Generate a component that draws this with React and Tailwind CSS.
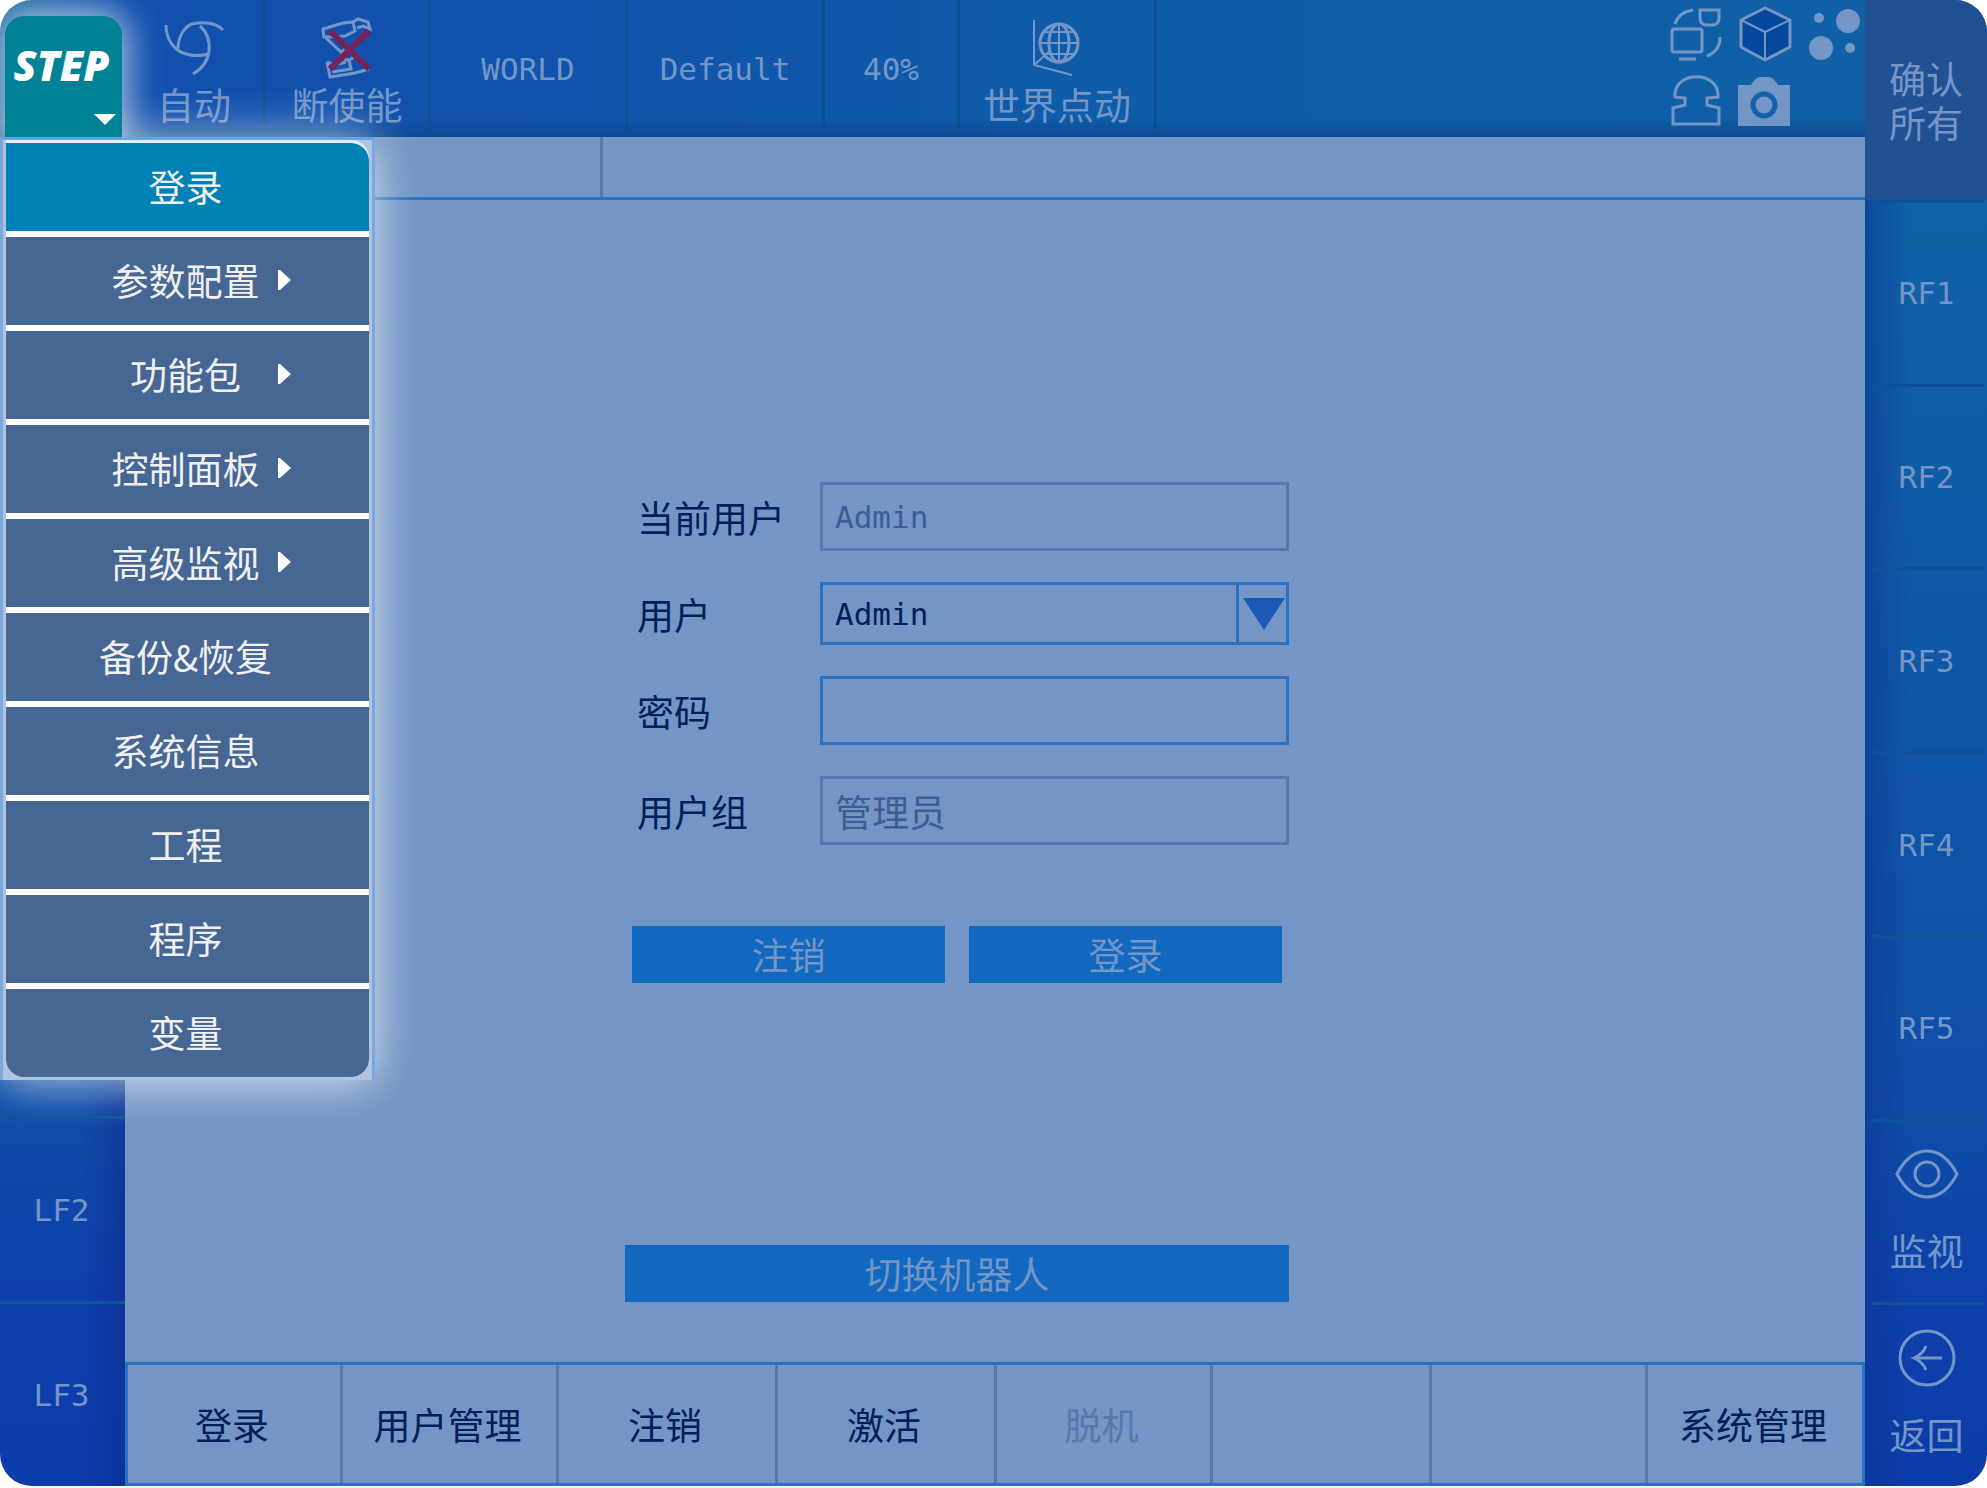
const menuItems = [
  { label: '登录', active: true },
  { label: '参数配置', sub: true },
  { label: '功能包', sub: true },
  { label: '控制面板', sub: true },
  { label: '高级监视', sub: true },
  { label: '备份&恢复' },
  { label: '系统信息' },
  { label: '工程' },
  { label: '程序' },
  { label: '变量' },
]

const tabs = [
  { label: '登录' },
  { label: '用户管理' },
  { label: '注销' },
  { label: '激活' },
  { label: '脱机', disabled: true },
  { label: '' },
  { label: '' },
  { label: '系统管理' },
]

const rightKeys = ['RF1', 'RF2', 'RF3', 'RF4', 'RF5']

function AutoIcon() {
  return (
    <svg width="64" height="56" viewBox="164 17 64 56" fill="none" stroke="currentColor" strokeWidth="3">
      <path d="M168 22C168 36 176 48 188 51Q198 54 211 51" />
      <path d="M180 46C180 34 186 24 194 21C206 18 218 20 225 27" />
      <path d="M202 23C209 29 212 38 211 48Q209 63 195 71" />
    </svg>
  )
}

function RobotIcon() {
  return (
    <svg width="56" height="64" viewBox="318 11 56 64" fill="none" stroke="currentColor" strokeWidth="3">
      <path d="M322 24L342 18L352 17L354 26L344 31L330 32L323 32Z" />
      <path d="M352 17L357 14L367 17L369 24L362 21L356 23" />
      <path d="M325 33L341 48M334 31L347 45" />
      <circle cx="347" cy="49" r="6" />
      <path d="M326 57L329 72L354 68L368 64M326 57L334 60L345 57M348 55L350 64L331 67" />
      <path d="M329 26L368 64M368 26L329 64" stroke="#76225a" strokeWidth="6" />
    </svg>
  )
}

function GlobeIcon() {
  return (
    <svg width="52" height="60" viewBox="1034 14 52 60" fill="none" stroke="currentColor" strokeWidth="3">
      <circle cx="1062" cy="39" r="19" />
      <ellipse cx="1062" cy="39" rx="10" ry="19" />
      <path d="M1062 19V59M1042 39H1082M1046 28H1078M1046 50H1078" strokeWidth="2" />
      <path d="M1037 16V61L1075 71M1037 61L1053 47" strokeWidth="2" />
    </svg>
  )
}

function StatusIcons() {
  return (
    <div className="mr-[3px] grid grid-cols-3 gap-x-[13px] gap-y-[11px] self-start pt-1.5">
      <svg width="56" height="56" viewBox="1668 6 56 56" fill="none" stroke="currentColor" strokeWidth="3">
        <rect x="1672" y="29" width="30" height="23" rx="2" />
        <path d="M1679 59H1696M1675 24Q1679 12 1693 10M1720 37Q1720 51 1707 56" />
        <path d="M1700 10H1719V18Q1719 25 1712 25H1707Q1700 25 1700 18Z" />
      </svg>
      <svg width="56" height="56" viewBox="1738 6 56 56" fill="#04479b" stroke="currentColor" strokeWidth="3" strokeLinejoin="round">
        <path d="M1766 8L1791 20V47L1766 60L1742 47V20Z" />
        <path d="M1742 20L1766 32L1791 20M1766 32V60" fill="none" strokeWidth="2" />
      </svg>
      <svg width="56" height="56" viewBox="1805 6 56 56" fill="currentColor">
        <circle cx="1818" cy="18" r="5" />
        <circle cx="1847" cy="21" r="12" />
        <circle cx="1820" cy="48" r="12" />
        <circle cx="1849" cy="48" r="5" />
      </svg>
      <svg width="56" height="56" viewBox="1668 73 56 56" fill="none" stroke="currentColor" strokeWidth="3">
        <path d="M1675 97C1673 70 1720 70 1718 97L1707 98V105L1719 108V124H1673V108L1685 105V98Z" />
      </svg>
      <svg width="56" height="56" viewBox="1738 73 56 56" fill="currentColor">
        <path d="M1739 85H1752Q1757 77 1761 77H1770Q1774 77 1779 85H1791V126H1739Z" />
        <circle cx="1765" cy="105" r="11" fill="none" stroke="#1361a8" strokeWidth="5" />
      </svg>
    </div>
  )
}

function StatusCell({ className, icon, children }) {
  return (
    <button
      className={`flex shrink-0 flex-col items-center border-r-[3px] border-[#0c4f95] ${
        icon ? 'justify-start pt-3.5' : "justify-center font-['DejaVu_Sans_Mono','Noto_Sans_CJK_SC',monospace] text-[31px]"
      } ${className}`}
    >
      {icon && <span className="flex h-[68px] items-center">{icon}</span>}
      {children}
    </button>
  )
}

function SideKey({ children }) {
  return (
    <button className="flex flex-1 flex-col items-center justify-center border-t-[3px] border-[#0d5298] pr-0.5">
      {children}
    </button>
  )
}

function Header() {
  return (
    <header className="flex h-[137px] shrink-0 bg-[linear-gradient(to_top,#0c4a94,transparent_18px),linear-gradient(to_right,#1a66a4,#1150ae_130px,#1152ac_500px,#0f5ca8_1100px,#0f60a6)] text-[#7496c6]">
      <div className="w-[125px] shrink-0" />
      <StatusCell className="w-[141px]" icon={<AutoIcon />}>自动</StatusCell>
      <StatusCell className="w-[165px]" icon={<RobotIcon />}>断使能</StatusCell>
      <StatusCell className="w-[197px]">WORLD</StatusCell>
      <StatusCell className="w-[197px]">Default</StatusCell>
      <StatusCell className="w-[135px]">40%</StatusCell>
      <StatusCell className="w-[197px]" icon={<GlobeIcon />}>世界点动</StatusCell>
      <div className="flex-1" />
      <StatusIcons />
    </header>
  )
}

function LoginForm() {
  const field = 'w-[469px] border-[3px] bg-transparent px-3'
  return (
    <form className="ml-[500px] flex w-[664px] flex-col pt-[282px]" onSubmit={(e) => e.preventDefault()}>
      <div className="flex flex-col gap-[31px] pl-3 text-[#00205a]">
        <div className="flex h-[69px] items-center justify-between">
          <label htmlFor="current">当前用户</label>
          <input id="current" disabled defaultValue="Admin" className={`${field} h-full border-[#5678aa] font-['DejaVu_Sans_Mono',monospace] text-[31px] text-[#3b5f92]`} />
        </div>
        <div className="flex h-[63px] items-center justify-between">
          <label htmlFor="user">用户</label>
          <div className="relative h-full">
            <select id="user" className={`${field} h-full appearance-none border-[#2b71c0] font-['DejaVu_Sans_Mono',monospace] text-[31px]`}>
              <option>Admin</option>
            </select>
            <div className="pointer-events-none absolute inset-y-0 right-0 flex w-[53px] items-start justify-center border-l-[3px] border-[#2b71c0] pt-4">
              <svg width="42" height="32" viewBox="0 0 42 32" fill="#1c58b4">
                <path d="M0 0H42L21 32Z" />
              </svg>
            </div>
          </div>
        </div>
        <div className="flex h-[69px] items-center justify-between">
          <label htmlFor="password">密码</label>
          <input id="password" type="password" className={`${field} h-full border-[#2b71c0]`} />
        </div>
        <div className="flex h-[69px] items-center justify-between">
          <label htmlFor="group">用户组</label>
          <input id="group" disabled defaultValue="管理员" className={`${field} h-full border-[#5678aa] text-[#3b5f92]`} />
        </div>
      </div>
      <div className="mt-[81px] flex gap-6 px-[7px] text-[#7496c6]">
        <button className="h-[57px] flex-1 bg-[#1268be] pb-0.5">注销</button>
        <button className="h-[57px] flex-1 bg-[#1268be] pb-0.5">登录</button>
      </div>
      <button type="button" className="mt-[262px] h-[57px] bg-[#1268be] pb-0.5 text-[#7496c6]">切换机器人</button>
    </form>
  )
}

function StepMenu() {
  return (
    <div className="absolute left-0 top-0 w-[375px]">
      {/* Glow around the tab and the list */}
      <div className="absolute left-[5px] top-4 h-[128px] w-[117px] rounded-t-[20px] shadow-[0_0_34px_6px_rgba(255,255,255,0.65)]" />
      <div className="absolute inset-x-[5px] bottom-[3px] top-[144px] rounded-[18px] shadow-[0_0_44px_8px_rgba(255,255,255,0.65)]" />

      <button className="relative ml-[5px] mt-4 block h-[121px] w-[117px] rounded-t-[20px] bg-[#008296] pr-1 text-white">
        <span className="block pb-6 font-['Open_Sans',sans-serif] text-[42px] font-extrabold italic leading-[56px]">STEP</span>
        <svg className="absolute bottom-3 right-1.5" width="22" height="11" viewBox="0 0 22 11" fill="currentColor">
          <path d="M0 0H22L11 11Z" />
        </svg>
      </button>

      <nav className="relative border-x-[3px] border-t-[3px] border-x-[#7aa8dc] border-t-[#64a4e4] bg-[#b0c4e0] px-[3px] pb-[3px]">
        <ul className="flex flex-col gap-1.5 overflow-hidden rounded-b-[18px] rounded-tr-[18px] border-t-[3px] border-[#e8eef8] bg-white">
          {menuItems.map((item) => (
            <li key={item.label}>
              <button className={`relative flex h-[88px] w-full items-center justify-center pb-0.5 pr-1 text-[#f0f0f0] ${item.active ? 'rounded-tr-[18px] bg-[#0082b6]' : 'bg-[#466694]'}`}>
                {item.label}
                {item.sub && (
                  <svg className="absolute right-[78px]" width="13" height="20" viewBox="0 0 13 20" fill="#fff">
                    <path d="M0 0H2L13 10L2 20H0Z" />
                  </svg>
                )}
              </button>
            </li>
          ))}
        </ul>
      </nav>
    </div>
  )
}

export default function App() {
  return (
    <div className="h-screen bg-white pb-0.5 font-['Noto_Sans_CJK_SC',sans-serif] text-[37px] font-normal leading-[44px]">
      <div className="relative flex h-full overflow-hidden rounded-[32px]">
        <div className="flex min-w-0 flex-1 flex-col">
          <Header />
          <div className="flex min-h-0 flex-1">
            <aside className="flex w-[125px] shrink-0 flex-col justify-end bg-[linear-gradient(to_left,rgba(10,40,140,0.5),transparent_44px),linear-gradient(to_bottom,#0f62a6,#0f4da8_72%,#0d3fab_86%,#0c3caa)] font-['DejaVu_Sans_Mono',monospace] text-[31px] text-[#7496c6]">
              <div className="flex h-[370px] flex-col">
                <SideKey>LF2</SideKey>
                <SideKey>LF3</SideKey>
              </div>
            </aside>
            <main className="flex min-w-0 flex-1 flex-col bg-[#7496c6]">
              <div className="flex h-[63px] shrink-0 border-b-[3px] border-[#2b71c0]">
                <div className="w-[478px] border-r-[3px] border-[#5678aa]" />
              </div>
              <div className="min-h-0 flex-1">
                <LoginForm />
              </div>
              <footer className="grid h-[124px] shrink-0 grid-cols-[215fr_216fr_219fr_219fr_216fr_219fr_216fr_214fr] border-[3px] border-[#2b71c0]">
                {tabs.map((tab, i) => (
                  <button
                    key={i}
                    disabled={tab.disabled}
                    className={`border-r-[3px] border-[#5678aa] pr-1 last:border-r-0 ${tab.disabled ? 'text-[#5678aa]' : 'text-[#00205a]'}`}
                  >
                    {tab.label}
                  </button>
                ))}
              </footer>
            </main>
          </div>
        </div>

        <aside className="flex w-[122px] shrink-0 flex-col bg-[linear-gradient(to_right,rgba(10,50,140,0.5),transparent_44px),linear-gradient(to_bottom,#0f62a6_200px,#0f4da8_75%,#0d3fab_88%,#0c3caa)] text-[#7496c6]">
          <button className="flex h-[200px] shrink-0 items-center justify-center bg-[#1f5193] px-6">确认所有</button>
          <div className="flex flex-1 flex-col pl-1.5 pr-[3px]">
            {rightKeys.map((key) => (
              <SideKey key={key}>
                <span className="font-['DejaVu_Sans_Mono',monospace] text-[31px]">{key}</span>
              </SideKey>
            ))}
            <SideKey>
              <svg className="mb-6" width="64" height="60" viewBox="0 0 64 60" fill="none" stroke="currentColor" strokeWidth="3">
                <path d="M2 30Q14 7 32 7T62 30Q50 53 32 53T2 30Z" />
                <circle cx="32" cy="30" r="12" />
              </svg>
              <span className="pb-2">监视</span>
            </SideKey>
            <SideKey>
              <svg className="mb-6" width="64" height="60" viewBox="0 0 64 60" fill="none" stroke="currentColor" strokeWidth="3">
                <circle cx="32" cy="30" r="27" />
                <path d="M47 30H19M31 18Q28 26 19 30Q28 34 31 42" />
              </svg>
              <span className="pb-2">返回</span>
            </SideKey>
          </div>
        </aside>

        <StepMenu />
      </div>
    </div>
  )
}
